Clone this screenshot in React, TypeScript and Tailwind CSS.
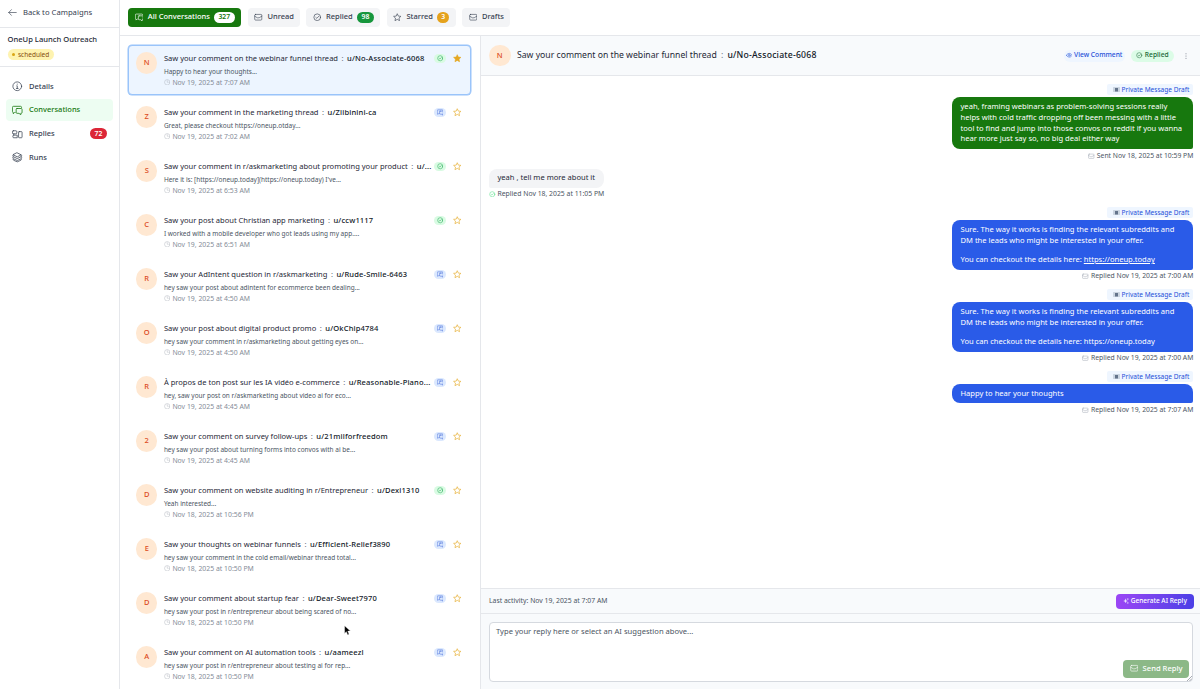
import type { ReactNode } from 'react'

type IconProps = { className?: string }

function Svg({ className, children, width = 1.5 }: IconProps & { children: ReactNode; width?: number }) {
  return (
    <svg viewBox="0 0 24 24" fill="none" stroke="currentColor" strokeWidth={width} strokeLinecap="round" strokeLinejoin="round" className={`shrink-0 ${className ?? ''}`} aria-hidden>
      {children}
    </svg>
  )
}

const ArrowIcon = (p: IconProps) => <Svg {...p} width={1.7}><path d="M22 12H2M9 4.5 2 12l7 7.5" /></Svg>
const InfoIcon = (p: IconProps) => <Svg {...p} width={1.7}><circle cx="12" cy="12" r="10" /><path d="M11 11h1v6M10 17h4M12 7v.4" /></Svg>
const ChatIcon = (p: IconProps) => (
  <Svg {...p} width={1.8}>
    <path d="M7 17H6l-3 3v-3a2 2 0 0 1-2-2V5.500A2.500 2.500 0 0 1 3.500 3h16A2.500 2.500 0 0 1 22 5.500" />
    <path d="M11.500 8H21a2 2 0 0 1 2 2v7a2 2 0 0 1-2 2h-1v3.500L16 19h-4.500a2 2 0 0 1-2-2v-7a2 2 0 0 1 2-2z" />
  </Svg>
)
const RepliesIcon = (p: IconProps) => (
  <Svg {...p} width={1.7}>
    <rect x="1" y="4" width="10" height="7" rx="2" />
    <path d="M4 11v3M11 14H4a2 2 0 0 0-2 2v2a2 2 0 0 0 2 2h7z" />
    <rect x="15" y="6" width="8" height="14" rx="1.500" />
  </Svg>
)
const LayersIcon = (p: IconProps) => (
  <Svg {...p} width={1.7}>
    <path d="m12 2 9 4.500L12 11 3 6.500z" />
    <path d="M3 6.500c-2 2-1.500 3.500 0 4.300L12 15l9-4.200c1.500-.8 2-2.300 0-4.300" />
    <path d="M3 11c-2 2-1.500 3.500 0 4.300l9 4.200 9-4.200c1.500-.8 2-2.300 0-4.300M3 16.500c-1 1.500 0 2 1 2.500l8 3.500 8-3.500c1-.5 2-1 1-2.500" />
  </Svg>
)
const MailIcon = (p: IconProps) => <Svg {...p} width={1.7}><rect x="2" y="4" width="20" height="16" rx="2.500" /><path d="m2 9 7.500 4.500h5L22 9" /></Svg>
const CheckIcon = (p: IconProps) => <Svg {...p} width={1.8}><circle cx="12" cy="12" r="9.500" /><path d="m8 12.500 2.800 2.500L16 9.500" /></Svg>
const ClockIcon = (p: IconProps) => <Svg {...p}><circle cx="12" cy="12" r="10" /><path d="M12 6v6h4" /></Svg>
const EyeIcon = (p: IconProps) => <Svg {...p} width={1.8}><path d="M1 12s4-7 11-7 11 7 11 7-4 7-11 7S1 12 1 12z" /><circle cx="12" cy="12" r="3.500" /></Svg>
const StarIcon = ({ className, filled }: IconProps & { filled?: boolean }) => (
  <svg viewBox="0 0 24 24" fill={filled ? 'currentColor' : 'none'} stroke="currentColor" strokeWidth={1.8} strokeLinejoin="round" className={`shrink-0 ${className ?? ''}`} aria-hidden>
    <path d="m12 2 3 6.700 7.300.800-5.400 5 1.500 7.200L12 18l-6.400 3.700 1.500-7.200-5.400-5L9 8.700z" />
  </svg>
)

const nav = [
  { label: 'Details', Icon: InfoIcon },
  { label: 'Conversations', Icon: ChatIcon, active: true },
  { label: 'Replies', Icon: RepliesIcon, count: 72 },
  { label: 'Runs', Icon: LayersIcon },
]

const conversations = [
  { title: 'Saw your comment on the webinar funnel thread', user: 'u/No-Associate-6068', text: 'Happy to hear your thoughts...', date: 'Nov 19, 2025 at 7:07 AM', letter: 'N', replied: true, selected: true },
  { title: 'Saw your comment in the marketing thread', user: 'u/Ziibinini-ca', text: 'Great, please checkout https://oneup.otday...', date: 'Nov 19, 2025 at 7:02 AM', letter: 'Z' },
  { title: 'Saw your comment in r/askmarketing about promoting your product', user: 'u/...', text: "Here it is: [https://oneup.today](https://oneup.today) I've...", date: 'Nov 19, 2025 at 6:53 AM', letter: 'S', replied: true },
  { title: 'Saw your post about Christian app marketing', user: 'u/ccw1117', text: 'I worked with a mobile developer who got leads using my app....', date: 'Nov 19, 2025 at 6:51 AM', letter: 'C', replied: true },
  { title: 'Saw your AdIntent question in r/askmarketing', user: 'u/Rude-Smile-6463', text: 'hey saw your post about adintent for ecommerce been dealing...', date: 'Nov 19, 2025 at 4:50 AM', letter: 'R' },
  { title: 'Saw your post about digital product promo', user: 'u/OkChip4784', text: 'hey saw your comment in r/askmarketing about getting eyes on...', date: 'Nov 19, 2025 at 4:50 AM', letter: 'O' },
  { title: 'À propos de ton post sur les IA vidéo e-commerce', user: 'u/Reasonable-Piano...', text: 'hey, saw your post on r/askmarketing about video ai for eco...', date: 'Nov 19, 2025 at 4:45 AM', letter: 'R' },
  { title: 'Saw your comment on survey follow-ups', user: 'u/21milforfreedom', text: 'hey saw your post about turning forms into convos with ai be...', date: 'Nov 19, 2025 at 4:45 AM', letter: '2' },
  { title: 'Saw your comment on website auditing in r/Entrepreneur', user: 'u/Dexi1310', text: 'Yeah interested...', date: 'Nov 18, 2025 at 10:56 PM', letter: 'D', replied: true },
  { title: 'Saw your thoughts on webinar funnels', user: 'u/Efficient-Relief3890', text: 'hey saw your comment in the cold email/webinar thread total...', date: 'Nov 18, 2025 at 10:50 PM', letter: 'E' },
  { title: 'Saw your comment about startup fear', user: 'u/Dear-Sweet7970', text: 'hey saw your post in r/entrepreneur about being scared of no...', date: 'Nov 18, 2025 at 10:50 PM', letter: 'D' },
  { title: 'Saw your comment on AI automation tools', user: 'u/aameezl', text: 'hey saw your post in r/entrepreneur about testing ai for rep...', date: 'Nov 18, 2025 at 10:50 PM', letter: 'A' },
]

function Avatar({ letter }: { letter: string }) {
  return (
    <div className="flex size-[21.5px] shrink-0 items-center justify-center rounded-full bg-[#ffe8d2] text-[7.5px] font-medium text-[#dc4a1d]">
      {letter}
    </div>
  )
}

function Tab({ icon, label, count, countClass, active, className }: { icon: ReactNode; label: string; count?: number; countClass?: string; active?: boolean; className: string }) {
  return (
    <button className={`flex h-[19px] items-center rounded-[4px] px-[6.500px] text-[7.5px] font-medium ${active ? 'bg-[#17780e] text-white' : 'bg-[#f3f4f6] text-[#374151]'} ${className}`}>
      {icon}
      <span className="ml-[4.500px] whitespace-nowrap">{label}</span>
      {count !== undefined && (
        <span className={`ml-auto flex h-[11px] items-center justify-center rounded-full text-[6.800px] font-semibold ${countClass}`}>{count}</span>
      )}
    </button>
  )
}

function ConversationRow({ title, user, text, date, letter, replied, selected }: (typeof conversations)[number]) {
  return (
    <li className={`flex h-[50px] shrink-0 rounded-[4px] border pt-[6.500px] pl-[6.600px] ${selected ? 'border-[#9ac4fa] bg-[#edf5ff] shadow-[0_0_0_0.5px_#9ac4fa]' : 'border-transparent'}`}>
      <Avatar letter={letter} />
      <div className="mt-[0.500px] ml-[6.400px] w-[270px] shrink-0">
        <p className="h-[11px] whitespace-nowrap text-[7.550px] leading-[11px] text-[#1f2937]">
          {title}
          <span className="mx-[3.500px] text-[#6b7280]">:</span>
          <span className="font-medium tracking-[0.160px] text-[#111827]">{user}</span>
        </p>
        <p className="mt-[3px] h-[9px] whitespace-nowrap text-[6.480px] leading-[9px] text-[#4b5563]">{text}</p>
        <p className="mt-[2px] flex h-[9px] items-center gap-[2px] text-[6.880px] leading-[9px] text-[#858c98]">
          <ClockIcon className="size-[6.500px] text-[#a5abb5]" />
          {date}
        </p>
      </div>
      <div className="flex h-[13px] items-center">
        <span className={`flex h-[9px] w-[12.500px] items-center justify-center rounded-full ${replied ? 'bg-[#d9fbe3] text-[#16a34a]' : 'bg-[#dbe8fe] text-[#3b63d8]'}`}>
          {replied ? <CheckIcon className="size-[6.500px]" /> : <ChatIcon className="size-[6.500px]" />}
        </span>
        <StarIcon filled={selected} className="ml-[7px] size-[8.500px] text-[#e5a823]" />
      </div>
    </li>
  )
}

function Message({ children, meta, tone, className }: { children: ReactNode; meta: string; tone: string; className: string }) {
  return (
    <div className={`flex flex-col items-end ${className}`}>
      <span className="flex h-[11px] w-[86px] items-center justify-end gap-[2px] rounded-[2px] bg-[#eff6ff] pr-[4px] text-[6.550px] text-[#1d4ed8]">
        <svg viewBox="0 0 14 10" className="h-[5px] w-[7px]" aria-hidden>
          <rect width="14" height="10" rx="1" fill="#cbd5e1" />
          <rect x="4" y="2" width="6" height="7" fill="#64748b" />
        </svg>
        Private Message Draft
      </span>
      <div className={`mt-[2px] w-[241.500px] rounded-[8px] rounded-br-[2px] px-[8.700px] text-[7.580px] leading-[10.800px] whitespace-nowrap text-white ${tone}`}>{children}</div>
      <span className="mt-[2.500px] -mb-[0.500px] flex h-[9px] items-center gap-[2px] text-[6.800px] text-[#4b5563]">
        <MailIcon className="size-[6.500px] text-[#9ca3af]" />
        {meta}
      </span>
    </div>
  )
}

export default function App() {
  return (
    <div className="relative flex h-[689px] w-[1200px] overflow-hidden bg-white font-['Noto_Sans',sans-serif] text-[7.5px] text-[#374151]">
      <aside className="flex w-[120px] shrink-0 flex-col border-r border-[#e5e7eb]">
        <div className="flex h-[28px] items-center gap-[6px] border-b border-[#e5e7eb] pb-[2px] pl-[8px]">
          <ArrowIcon className="size-[9px]" />
          <span className="text-[7.700px]">Back to Campaigns</span>
        </div>
        <div className="h-[39px] border-b border-[#e5e7eb] pt-[4.500px] pl-[7.500px]">
          <h1 className="text-[7.600px] leading-[12px] font-medium text-[#1f2937]">OneUp Launch Outreach</h1>
          <span className="mt-[4.500px] flex h-[11px] w-[46.500px] items-center gap-[3px] rounded-full bg-[#fef3b0] pl-[4.500px] text-[6.500px] text-[#854d0e]">
            <i className="size-[3px] rounded-full bg-[#d9a514]" />
            scheduled
          </span>
        </div>
        <nav className="flex flex-col gap-[2.300px] px-[6px] pt-[8.500px]">
          {nav.map(({ label, Icon, active, count }) => (
            <a key={label} className={`flex h-[21.500px] items-center rounded-[4px] px-[6px] ${active ? 'bg-[#edfdf2] text-[#17780e]' : ''}`}>
              <Icon className="size-[10.500px]" />
              <span className="ml-[6.500px] font-medium">{label}</span>
              {count && <span className="ml-auto flex h-[11px] w-[17px] items-center justify-center rounded-full bg-[#dc2637] text-[6.800px] font-semibold text-white">{count}</span>}
            </a>
          ))}
        </nav>
      </aside>

      <main className="flex min-w-0 flex-1 flex-col">
        <div className="flex h-[36px] shrink-0 items-center border-b border-[#e5e7eb] pl-[8.300px]">
          <Tab active className="mb-[1px] w-[113px]" icon={<ChatIcon className="size-[8.500px]" />} label="All Conversations" count={327} countClass="w-[21px] bg-white text-[#17780e]" />
          <Tab className="mb-[1px] ml-[6.700px] w-[52px]" icon={<MailIcon className="size-[8.500px]" />} label="Unread" />
          <Tab className="mb-[1px] ml-[6.500px] w-[74px]" icon={<CheckIcon className="size-[8.500px]" />} label="Replied" count={98} countClass="w-[17px] bg-[#16963c] text-white" />
          <Tab className="mb-[1px] ml-[6.500px] w-[69px]" icon={<StarIcon className="size-[8.500px]" />} label="Starred" count={3} countClass="w-[12.500px] bg-[#e5a21c] text-white" />
          <Tab className="mb-[1px] ml-[6.500px] w-[48px]" icon={<MailIcon className="size-[8.500px]" />} label="Drafts" />
        </div>

        <div className="flex min-h-0 flex-1">
          <ul className="flex w-[360px] shrink-0 flex-col gap-[4px] overflow-hidden pt-[8.500px] pr-[9px] pl-[8.400px]">
            {conversations.map(c => <ConversationRow key={c.title} {...c} />)}
          </ul>

          <section className="flex min-w-0 flex-1 flex-col border-l border-[#e5e7eb]">
            <header className="flex h-[40px] shrink-0 items-center border-b border-[#e5e7eb] bg-[#f8fafc] pr-[10px] pl-[8px]">
              <Avatar letter="N" />
              <p className="ml-[6.500px] text-[8.660px] text-[#1f2937]">
                Saw your comment on the webinar funnel thread
                <span className="mx-[4.200px] text-[#6b7280]">:</span>
                <span className="font-medium tracking-[0.2px] text-[#111827]">u/No-Associate-6068</span>
              </p>
              <span className="ml-auto flex h-[12px] w-[61px] items-center justify-center gap-[2px] rounded-full bg-[#eff6ff] text-[6.700px] font-medium text-[#1d4ed8]">
                <EyeIcon className="size-[6.500px]" />
                View Comment
              </span>
              <span className="ml-[6.500px] flex h-[12px] w-[43px] items-center justify-center gap-[2px] rounded-full bg-[#dcfce7] text-[6.700px] font-medium text-[#166534]">
                <CheckIcon className="size-[6.500px]" />
                Replied
              </span>
              <svg viewBox="0 0 8 8" className="ml-[8px] size-[8px] fill-[#6b7280]" aria-hidden>
                <circle cx="4" cy="1.700" r=".5" />
                <circle cx="4" cy="4" r=".5" />
                <circle cx="4" cy="6.300" r=".5" />
              </svg>
            </header>

            <div className="min-h-0 flex-1 pr-[6.700px] pl-[8px]">
              <Message className="pt-[8px]" tone="bg-[#17780e] h-[52px] pt-[4px]" meta="Sent Nov 18, 2025 at 10:59 PM">
                <p>yeah, framing webinars as problem-solving sessions really<br />helps with cold traffic dropping off been messing with a little<br />tool to find and jump into those convos on reddit if you wanna<br />hear more just say so, no big deal either way</p>
              </Message>
              <div className="mt-[8.500px] flex flex-col items-start">
                <div className="flex h-[19.500px] w-[115px] items-center rounded-[8px] rounded-bl-[2px] bg-[#f3f4f6] pb-[1px] pl-[8.500px] text-[7.570px] text-[#1f2937]">yeah , tell me more about it</div>
                <span className="mt-[1.500px] flex h-[9px] items-center gap-[2px] text-[6.850px] text-[#4b5563]">
                  <CheckIcon className="size-[6.500px] text-[#4ade80]" />
                  Replied Nov 18, 2025 at 11:05 PM
                </span>
              </div>
              <Message className="mt-[8.500px]" tone="bg-[#2a5be8] h-[49.500px] pt-[4px]" meta="Replied Nov 19, 2025 at 7:00 AM">
                <p>Sure. The way it works is finding the relevant subreddits and<br />DM the leads who might be interested in your offer.</p>
                <p className="mt-[8.500px]">You can checkout the details here: <span className="underline">https://oneup.today</span></p>
              </Message>
              <Message className="mt-[8.500px]" tone="bg-[#2a5be8] h-[49.500px] pt-[4px]" meta="Replied Nov 19, 2025 at 7:00 AM">
                <p>Sure. The way it works is finding the relevant subreddits and<br />DM the leads who might be interested in your offer.</p>
                <p className="mt-[8.500px]">You can checkout the details here: https://oneup.today</p>
              </Message>
              <Message className="mt-[8.500px]" tone="bg-[#2a5be8] h-[19px] pt-[4px]" meta="Replied Nov 19, 2025 at 7:07 AM">
                <p>Happy to hear your thoughts</p>
              </Message>
            </div>

            <div className="flex h-[25px] shrink-0 items-center justify-between border-t border-[#e5e7eb] bg-[#f8fafc] pr-[6.500px] pl-[8px]">
              <span className="text-[6.850px] text-[#4b5563]">Last activity: Nov 19, 2025 at 7:07 AM</span>
              <button className="flex h-[15px] w-[77.500px] items-center justify-center gap-[2px] rounded-[4px] bg-linear-to-r from-[#9b45f5] to-[#4a3ee6] text-[6.550px] font-medium text-white">
                <Svg className="size-[6px]" width={1.5}>
                  <path d="M10 5c0 5-2 7-7 7 5 0 7 2 7 7 0-5 2-7 7-7-5 0-7-2-7-7z" fill="currentColor" />
                  <path d="M19 2v5M16.500 4.500h5M19 17v5M16.500 19.500h5" />
                </Svg>
                Generate AI Reply
              </button>
            </div>
            <div className="h-[76px] shrink-0 border-t border-[#e5e7eb] bg-[#f8fafc] pt-[8px] pr-[6.700px] pl-[8px]">
              <div className="relative flex h-[60px] items-end justify-end rounded-[4px] border border-[#d5d9df] bg-white pr-[3px] pb-[3.500px]">
                <span className="mr-auto mb-auto pt-[3px] pl-[6px] text-[7.620px] text-[#4b5563]">Type your reply here or select an AI suggestion above...</span>
                <button className="flex h-[18px] w-[66.500px] items-center justify-center gap-[4.500px] rounded-[4px] bg-[#8cb887] text-[7.600px] font-medium text-white">
                  <MailIcon className="size-[8.500px]" />
                  Send Reply
                </button>
                <svg viewBox="0 0 5 5" className="absolute right-0 bottom-0 size-[5px] stroke-[#6b7280]" strokeWidth=".6" aria-hidden>
                  <path d="M0 5 5 0M2.500 5 5 2.500" />
                </svg>
              </div>
            </div>
          </section>
        </div>
      </main>

      <svg viewBox="0 0 12 18" className="absolute top-[625px] left-[344px] h-[11px] w-[7px]" aria-hidden>
        <path d="M1 1v13l3-3 2.300 5.500 2.400-1L6.500 10H11z" fill="#000" stroke="#fff" strokeWidth=".7" />
      </svg>
    </div>
  )
}
